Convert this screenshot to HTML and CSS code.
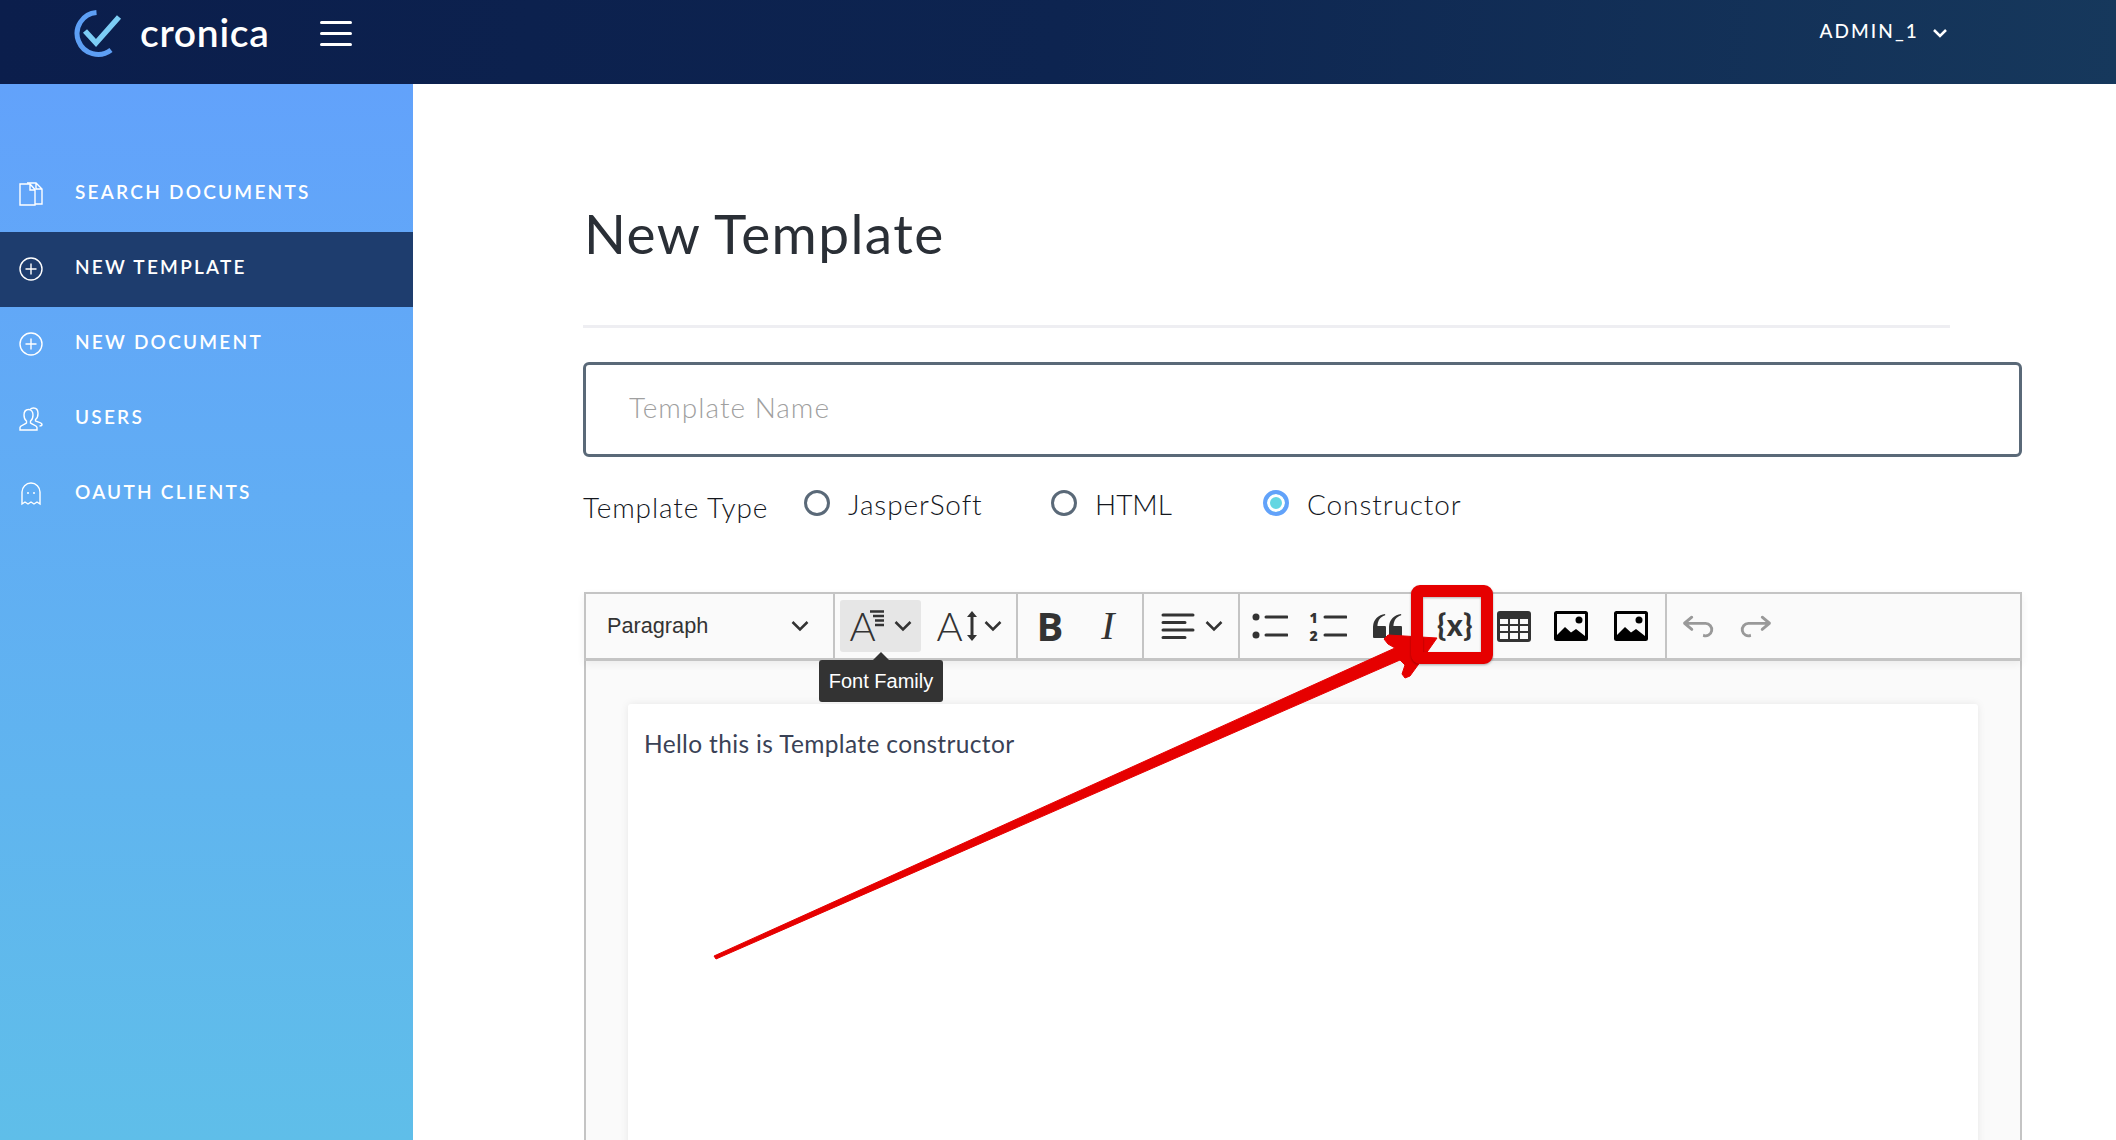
FILE: index.html
```html
<!DOCTYPE html>
<html lang="en">
<head>
<meta charset="utf-8">
<title>New Template</title>
<link rel="stylesheet" href="styles.css">
</head>
<body>
<div class="app">
  <header class="topbar">
    <div class="brand">
      <svg class="logo" viewBox="0 0 50 48" aria-hidden="true">
        <path class="logo-arc" d="M24.5 2.500A21 21 0 1 0 39 40"/>
        <path class="logo-check" d="M13 21l11 12 23-26"/>
      </svg>
      <span class="brand-name">cronica</span>
    </div>
    <button class="burger" aria-label="Menu"><i></i><i></i><i></i></button>
    <div class="user">
      <span>ADMIN_1</span>
      <svg class="user-chevron" viewBox="0 0 16 10"><path d="M2 2l6 6 6-6"/></svg>
    </div>
  </header>
  <div class="body-row">
    <nav class="sidebar">
      <a class="nav-item">
        <svg class="nav-icon" viewBox="0 0 24 24"><path d="M1 7.500L1 23h15V7.500L11 2H1z M11 2v6h5"/><path d="M8 1h9l6 6v15h-7M17 1v6h6" /></svg>
        <span>SEARCH DOCUMENTS</span>
      </a>
      <a class="nav-item active">
        <svg class="nav-icon" viewBox="0 0 24 24"><circle cx="12" cy="12" r="11"/><path d="M12 6.500v11M6.500 12h11"/></svg>
        <span>NEW TEMPLATE</span>
      </a>
      <a class="nav-item">
        <svg class="nav-icon" viewBox="0 0 24 24"><circle cx="12" cy="12" r="11"/><path d="M12 6.500v11M6.500 12h11"/></svg>
        <span>NEW DOCUMENT</span>
      </a>
      <a class="nav-item">
        <svg class="nav-icon" viewBox="0 0 24 24"><path d="M1 23v-2.500c0-2 5-3 6.500-4.500v-2c-1.500-1-2.500-3-2.500-6 0-3.500 2-5.500 4.500-5.500S14 4.500 14 8c0 3-1 5-2.500 6v2c1.500 1.500 6.500 2.500 6.500 4.500V23z"/><path d="M11 2.500C12 1.500 13 1 14.500 1 17 1 19 3 19 6.500c0 3-1 5-2.500 6v1.500c1.500 1 6.500 1.500 6.500 3.500 0 1-1 1.500-2.500 1.500"/></svg>
        <span>USERS</span>
      </a>
      <a class="nav-item">
        <svg class="nav-icon" viewBox="0 0 24 24"><path d="M3 22V10a9 9 0 0 1 18 0v12l-3-2-3 2-3-2-3 2-3-2z"/><circle class="dot" cx="9" cy="11" r="1"/><circle class="dot" cx="15" cy="11" r="1"/></svg>
        <span>OAUTH CLIENTS</span>
      </a>
    </nav>
    <main class="content">
      <h1 class="title">New Template</h1>
      <hr class="divider">
      <input class="name-input" type="text" placeholder="Template Name">
      <div class="type-row">
        <span class="type-label">Template Type</span>
        <label class="radio radio-jasper"><span class="radio-mark"></span>JasperSoft</label>
        <label class="radio radio-html"><span class="radio-mark"></span>HTML</label>
        <label class="radio"><span class="radio-mark checked"></span>Constructor</label>
      </div>
      <section class="editor">
        <div class="toolbar">
          <div class="group group-heading">
            <span class="heading-label">Paragraph</span>
            <svg class="chev" viewBox="0 0 18 12"><path d="M1.500 2L9 9.500 16.500 2"/></svg>
          </div>
          <div class="group group-font">
            <div class="btn btn-family hover">
              <span class="big-a">A</span>
              <svg class="a-lines" viewBox="0 0 15 17"><path d="M1 1.500h14M4 6h11M6 10.500h9M6 15h9"/></svg>
              <svg class="chev" viewBox="0 0 18 12"><path d="M1.500 2L9 9.500 16.500 2"/></svg>
            </div>
            <div class="btn btn-size">
              <span class="big-a">A</span>
              <svg class="size-arrow" viewBox="0 0 12 30"><path class="ink-fill" d="M6 0l5 6H1zM6 30l5-6H1z"/><path class="ink-line" d="M6 4v22"/></svg>
              <svg class="chev" viewBox="0 0 18 12"><path d="M1.500 2L9 9.500 16.500 2"/></svg>
            </div>
          </div>
          <div class="group group-style">
            <div class="btn btn-style"><span class="glyph-b">B</span></div>
            <div class="btn btn-style"><span class="glyph-i">I</span></div>
          </div>
          <div class="group group-align">
            <div class="btn btn-align">
              <svg class="align-icon" viewBox="0 0 34 26"><path d="M2 2h30M2 9.500h22M2 17h30M2 24.500h22"/></svg>
              <svg class="chev" viewBox="0 0 18 12"><path d="M1.500 2L9 9.500 16.500 2"/></svg>
            </div>
          </div>
          <div class="group group-insert">
            <div class="btn w-58">
              <svg class="list-icon" viewBox="0 0 36 26"><circle class="ink-fill" cx="4" cy="4" r="3.500"/><circle class="ink-fill" cx="4" cy="22" r="3.500"/><path class="ink-line" d="M14 4h21M14 22h21"/></svg>
            </div>
            <div class="btn w-58 num-btn">
              <span class="num-col"><span>1</span><span>2</span></span>
              <svg class="num-lines" viewBox="0 0 24 26"><path class="ink-line" d="M2 4h21M2 22h21"/></svg>
            </div>
            <div class="btn w-60">
              <svg class="quote-icon" viewBox="0 0 20 20"><path class="ink-fill" d="M3 10.423a6.5 6.5 0 0 1 6.056-6.408l.038.67C6.448 5.423 5.354 7.663 5.22 10H9c.552 0 .5.432.5.986v4.511c0 .554-.448.503-1 .503h-5c-.552 0-.5-.449-.5-1.003v-4.574zm8 0a6.5 6.5 0 0 1 6.056-6.408l.038.67c-2.646.739-3.74 2.979-3.873 5.315H17c.552 0 .5.432.5.986v4.511c0 .554-.448.503-1 .503h-5c-.552 0-.5-.449-.5-1.003v-4.574z"/></svg>
            </div>
            <div class="btn w-76"><span class="glyph-var">{x}</span></div>
            <div class="btn w-42">
              <svg class="table-icon" viewBox="0 0 34 31">
                <rect class="ink-fill" width="34" height="31" rx="3"/>
                <g class="cells">
                  <rect x="3" y="8" width="8" height="5"/><rect x="13" y="8" width="8" height="5"/><rect x="23" y="8" width="8" height="5"/>
                  <rect x="3" y="15" width="8" height="5"/><rect x="13" y="15" width="8" height="5"/><rect x="23" y="15" width="8" height="5"/>
                  <rect x="3" y="22" width="8" height="6"/><rect x="13" y="22" width="8" height="6"/><rect x="23" y="22" width="8" height="6"/>
                </g>
              </svg>
            </div>
            <div class="btn w-72">
              <svg class="image-icon" viewBox="0 0 34 30"><rect class="img-frame" x="1.500" y="1.500" width="31" height="27" rx="1"/><circle cx="25" cy="9" r="3.500"/><path d="M3 24l8-8 6 5.500 5-3.500 9 7v2H3z"/></svg>
            </div>
            <div class="btn w-48">
              <svg class="image-icon" viewBox="0 0 34 30"><rect class="img-frame" x="1.500" y="1.500" width="31" height="27" rx="1"/><circle cx="25" cy="9" r="3.500"/><path d="M3 24l8-8 6 5.500 5-3.500 9 7v2H3z"/></svg>
            </div>
          </div>
          <div class="group group-history">
            <div class="btn w-58">
              <svg class="history-icon" viewBox="0 0 20 20"><path d="m5.042 9.367 2.189 1.837a.75.75 0 0 1-.965 1.149l-3.788-3.18a.747.747 0 0 1-.21-.284.75.75 0 0 1 .17-.945L6.23 4.762a.75.75 0 1 1 .964 1.15L4.863 7.866h8.917A.75.75 0 0 1 14 7.9a4 4 0 1 1-1.477 7.718l.344-1.489a2.5 2.5 0 1 0 1.094-4.73l.008-.032H5.042z"/></svg>
            </div>
            <div class="btn w-58">
              <svg class="history-icon" viewBox="0 0 20 20"><path d="m14.958 9.367-2.189 1.837a.75.75 0 0 0 .965 1.149l3.788-3.18a.747.747 0 0 0 .21-.284.75.75 0 0 0-.17-.945L13.77 4.762a.75.75 0 1 0-.964 1.15l2.331 1.955H6.22A.75.75 0 0 0 6 7.9a4 4 0 1 0 1.477 7.718l-.344-1.489A2.5 2.5 0 1 1 6.039 9.4l-.008-.032h8.927z"/></svg>
            </div>
          </div>
          <div class="tooltip">Font Family</div>
        </div>
        <div class="canvas">
          <div class="sheet">
            <p class="sheet-text">Hello this is Template constructor</p>
          </div>
        </div>
      </section>
    </main>
  </div>
  <svg class="annotation" viewBox="0 0 2116 1140" aria-hidden="true">
    <path class="arrow-shape" d="M714 956L1395 648 1388 644 1384 639 1388 635 1437 638 1418 665 1410 676 1405 678 1402 674 1405 665 1400 660 716 959z"/>
    <rect class="arrow-box" x="1417" y="591" width="70" height="67" rx="3"/>
  </svg>
</div>
</body>
</html>
```
FILE: styles.css
```css
* { box-sizing: border-box; }
html, body { margin: 0; height: 100%; }
body { font-family: "Lato", "Liberation Sans", sans-serif; color: #2a2f36; background: #fff; overflow: hidden; }
.app { position: relative; width: 2116px; height: 1140px; overflow: hidden; display: flex; flex-direction: column; }

/* top bar */
.topbar { flex: none; height: 84px; display: flex; align-items: flex-start; padding-left: 72px; background: linear-gradient(95deg, #0b1e4c 0%, #0d2450 50%, #16385c 100%); color: #fff; }
.brand { display: flex; align-items: flex-start; width: 248px; }
.logo { width: 50px; height: 48px; margin-top: 10px; flex: none; fill: none; }
.logo-arc { stroke: #5d9ff5; stroke-width: 5; }
.logo-check { stroke: #7ccdf5; stroke-width: 5.500; }
.brand-name { margin-left: 18px; font-size: 39px; font-weight: 600; line-height: 44px; margin-top: 10px; white-space: nowrap; letter-spacing: .7px; }
.burger { width: 32px; margin-top: 21px; padding: 0; border: 0; background: none; display: flex; flex-direction: column; gap: 8px; }
.burger i { display: block; height: 3px; background: #fff; border-radius: 2px; }
.user { margin-left: auto; margin-right: 168px; display: flex; align-items: center; gap: 13px; margin-top: 19px; font-size: 19px; font-weight: 500; letter-spacing: 2.100px; line-height: 23px; }
.user-chevron { width: 16px; height: 10px; fill: none; stroke: #fff; stroke-width: 2.500; margin-top: 4px; }

/* sidebar */
.body-row { flex: 1; display: flex; min-height: 0; }
.sidebar { flex: none; width: 413px; padding-top: 73px; background: linear-gradient(180deg, #62a2fb 0%, #5fbee9 100%); }
.nav-item { height: 75px; display: flex; align-items: center; gap: 32px; padding: 0 0 2px 19px; color: #fff; font-size: 19px; font-weight: 600; letter-spacing: 2.250px; }
.nav-item.active { background: #1e3d6e; }
.nav-item span { margin-top: -4px; }
.nav-icon { width: 24px; height: 24px; flex: none; fill: none; stroke: #fff; stroke-width: 1.400; }
.nav-icon .dot { fill: #fff; stroke: none; }

/* content */
.content { flex: 1; min-width: 0; padding: 0 94px 0 171px; }
.title { margin: 117px 0 0; font-size: 55px; font-weight: 400; line-height: 64px; letter-spacing: 1.400px; color: #2a2f36; }
.divider { margin: 60px 72px 0 -1px; height: 3px; border: 0; background: #eeeef2; }
.name-input { display: block; width: 1439px; height: 95px; margin: 34px 0 0 -1px; padding: 0 43px 5px; border: 3px solid #5a6978; border-radius: 6px; font: 300 28px "Lato", sans-serif; letter-spacing: 1px; outline: 0; color: #2a2f36; }
.name-input::placeholder { color: #a0a0a0; opacity: 1; }
.type-row { display: flex; align-items: center; height: 40px; margin: 27px 0 0 -1px; font-size: 28px; font-weight: 300; letter-spacing: .9px; color: #14171d; }
.type-label { width: 221px; margin-top: 6px; }
.radio { display: flex; align-items: center; gap: 18px; }
.radio-jasper { width: 247px; }
.radio-html { width: 212px; letter-spacing: 0; }
.radio-mark { width: 26px; height: 26px; border: 3px solid #5a6978; border-radius: 50%; background: #fff; margin-top: -2px; }
.radio-mark.checked { border: 4px solid #62a2fa; background: #64d6e2; box-shadow: inset 0 0 0 3px #fff; }

/* editor */
.editor { margin: 68px 0 0; width: 1438px; height: 548px; border: solid #c4c4c4; border-width: 0 2px; background: #fafafa; }
.toolbar { position: relative; display: flex; margin: 0 -2px; height: 69px; border: 2px solid #c4c4c4; border-bottom-width: 3px; border-radius: 2px 2px 0 0; background: #fafafa; box-shadow: 0 3px 8px rgba(0, 0, 0, .06); }
.group { display: flex; align-items: center; border-right: 2px solid #c4c4c4; flex: none; }
.group-heading { width: 249px; padding-left: 21px; }
.heading-label { flex: 1; font: 400 21.700px "Liberation Sans", sans-serif; color: #333; }
.group-heading .chev { margin-right: 24px; }
.group-font { width: 183px; padding-left: 5px; }
.group-style { width: 126px; padding-left: 7px; gap: 8px; }
.group-align { width: 96px; padding-left: 8px; }
.group-insert { width: 427px; padding-left: 1px; }
.group-history { border: 0; padding-left: 2px; }
.btn { height: 52px; display: flex; align-items: center; justify-content: center; flex: none; border-radius: 3px; }
.hover { background: #e6e6e6; }
.chev { width: 18px; height: 12px; flex: none; fill: none; stroke: #333; stroke-width: 2.500; }
.btn-family { width: 81px; }
.btn-family .chev { margin-left: 10px; }
.btn-size { width: 86px; margin-left: 5px; }
.big-a { font: 300 40px/1 "Lato", sans-serif; color: #333; width: 27px; text-align: center; }
.a-lines { width: 15px; height: 17px; margin: -15px 0 0 -7px; fill: none; stroke: #333; stroke-width: 2.400; }
.size-arrow { width: 12px; height: 30px; margin: 0 6px 0 3px; }
.ink-fill { fill: #333; }
.ink-line { fill: none; stroke: #333; stroke-width: 3; stroke-linecap: round; }
.btn-style { width: 50px; }
.glyph-b { font: 700 40px/1 "Open Sans", sans-serif; color: #333; }
.glyph-i { font: italic 400 40px/1 "Liberation Serif", serif; color: #333; }
.btn-align { width: 80px; gap: 10px; }
.align-icon { width: 34px; height: 26px; fill: none; stroke: #333; stroke-width: 3; stroke-linecap: round; }
.w-58 { width: 58px; }
.w-60 { width: 60px; }
.w-76 { width: 76px; }
.w-42 { width: 42px; }
.w-72 { width: 72px; }
.w-48 { width: 48px; }
.list-icon { width: 36px; height: 26px; }
.num-btn { gap: 0; }
.num-col { display: flex; flex-direction: column; gap: 3px; font: 800 14px/15px "Open Sans", sans-serif; color: #333; width: 13px; }
.num-lines { width: 24px; height: 26px; }
.quote-icon { width: 40px; height: 40px; }
.glyph-var { margin-top: -5px; font: 900 30px/1 "Lato", sans-serif; color: #333; letter-spacing: .5px; }
.table-icon { width: 34px; height: 31px; }
.cells rect { fill: #fafafa; }
.image-icon { width: 34px; height: 30px; fill: #000; }
.img-frame { fill: #fafafa; stroke: #000; stroke-width: 3; }
.history-icon { width: 38px; height: 38px; fill: #999; }
.tooltip { position: absolute; left: 233px; top: 66px; width: 124px; height: 42px; display: flex; align-items: center; justify-content: center; border-radius: 3px; background: #333; color: #fff; font: 400 20px "Liberation Sans", sans-serif; z-index: 2; }
.tooltip::before { content: ""; position: absolute; left: 54px; top: -8px; border: 8px solid transparent; border-top: 0; border-bottom-color: #333; }
.canvas { padding: 43px 42px 0; }
.sheet { height: 460px; padding: 25px 16px; border-radius: 3px; background: #fff; box-shadow: 0 0 8px rgba(0, 0, 0, .08); }
.sheet-text { margin: 0; font-size: 24.500px; line-height: 30px; letter-spacing: .35px; color: #3a4256; }

/* annotation */
.annotation { position: absolute; inset: 0; width: 2116px; height: 1140px; pointer-events: none; }
.arrow-shape { fill: #e60000; stroke: #e60000; stroke-width: 1; stroke-linejoin: round; }
.arrow-box { fill: none; stroke: #e60000; stroke-width: 12; filter: drop-shadow(0 1px 1px rgba(0, 0, 0, .3)); }
```
